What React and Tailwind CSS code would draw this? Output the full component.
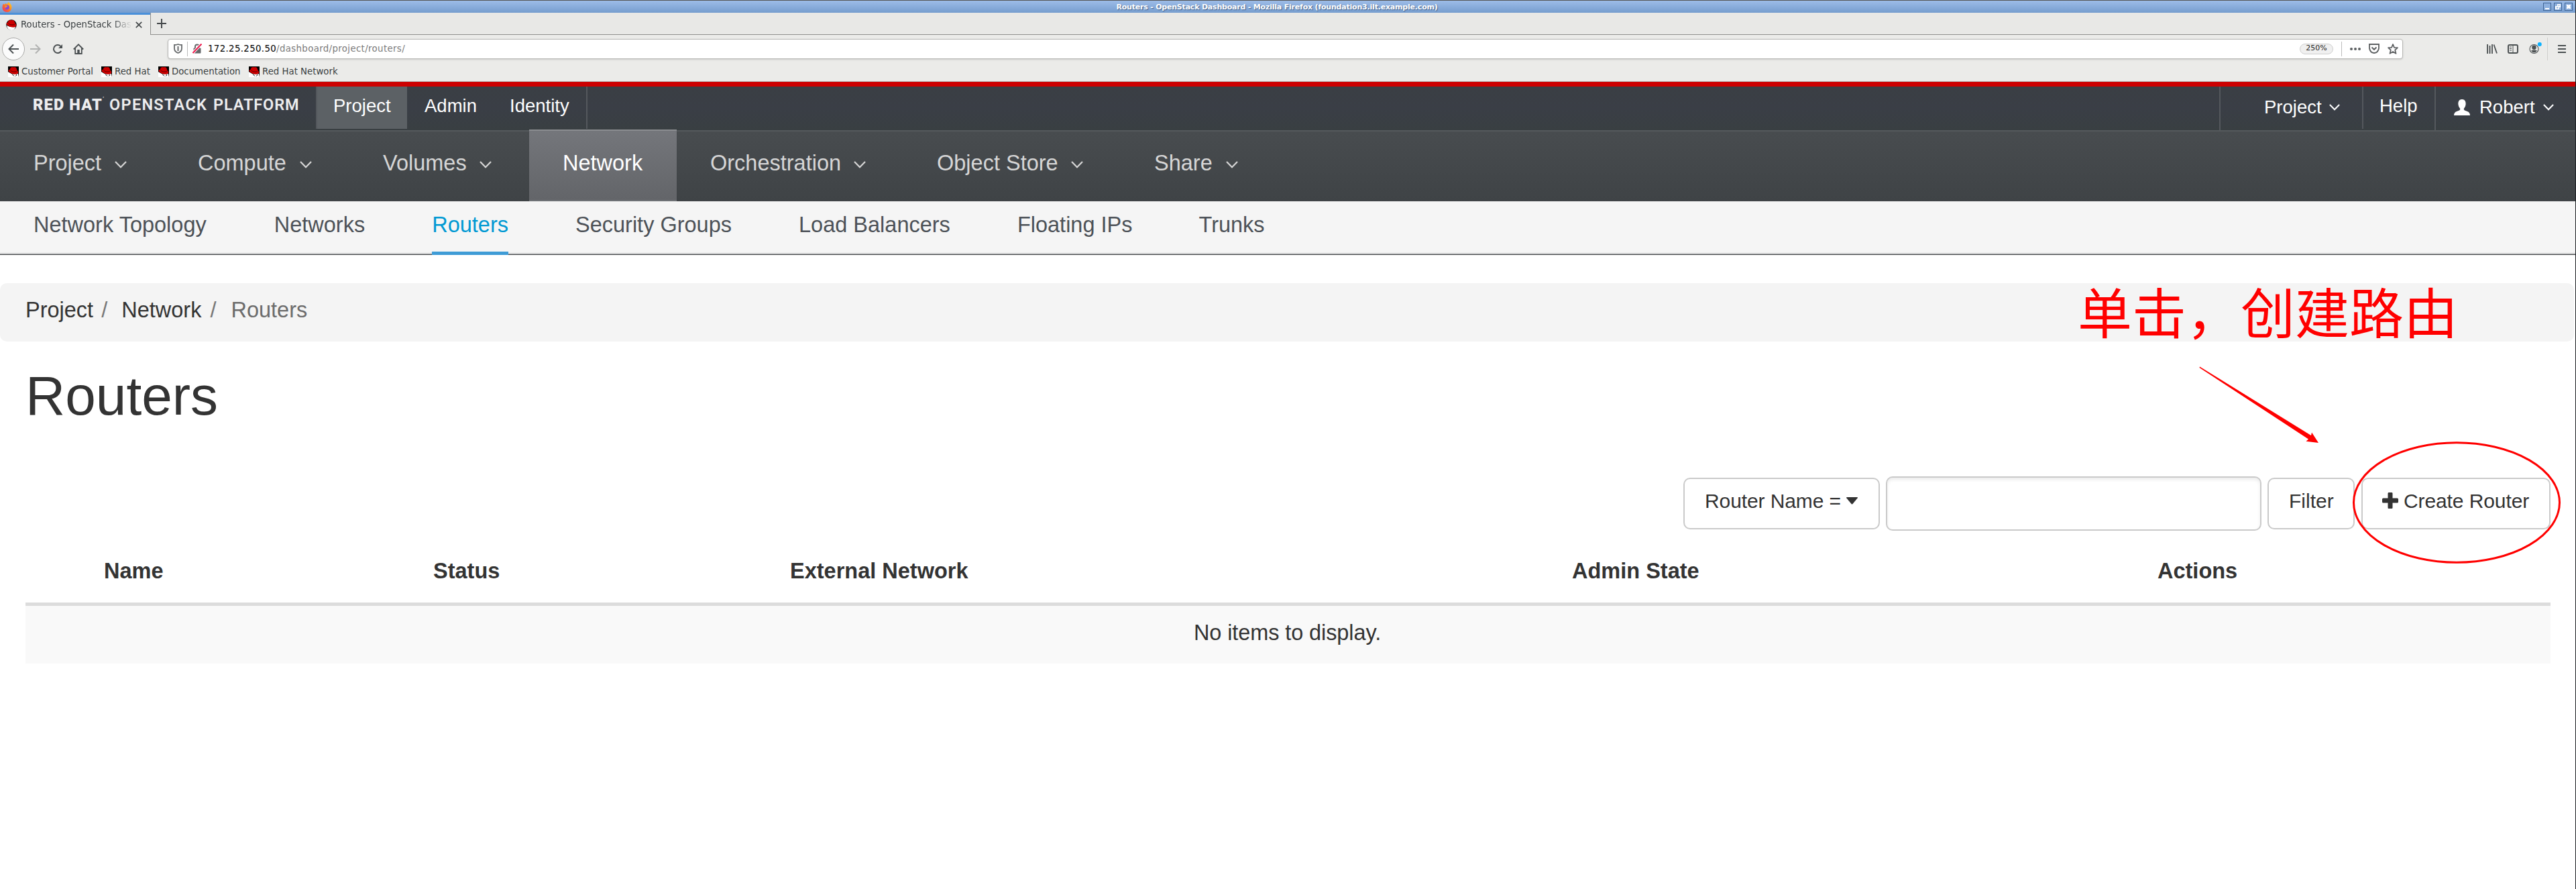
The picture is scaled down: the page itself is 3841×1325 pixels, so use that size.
import React from "react";

const sans = "font-['Liberation_Sans',sans-serif]";

function HatIcon({ round }) {
  return (
    <svg viewBox="0 0 16 16" className="h-4 w-4 shrink-0">
      {round ? <circle cx="8" cy="8" r="7.8" fill="#111" /> : <rect width="16" height="16" fill="#000" />}
      <path d={round ? "M1 9 L6 11 L14 11 Q13 16 8 16 Q2 16 1 9Z" : "M0 8 L6 11.500 L15 11 L16 16 H0Z"} fill="#fff" />
      <path d="M3.500 2 Q6 .3 8 1.3 Q12 .3 12.8 3.500 L13.500 6 Q16 8 14.800 10.200 Q12 13 6.500 11 Q.5 8.500 .6 6 Q1.200 4.300 3 4.500Z" fill="#cc0000" />
      <path d="M3.500 6 Q7 9 12.800 7.500" stroke="#5a0000" strokeWidth=".9" fill="none" />
      {!round && <path d="M6.500 12 L9 14.500 M13 12 L11.500 14.500" stroke="#000" strokeWidth="1" />}
    </svg>
  );
}

function Chevron({ className }) {
  return (
    <svg viewBox="0 0 18 11" className={className} fill="none" stroke="currentColor" strokeWidth="2.3">
      <path d="M1 1 L9 9.200 L17 1" />
    </svg>
  );
}

function TitleBar() {
  return (
    <div className="relative flex h-[19px] items-center justify-center border-t border-[#555] bg-gradient-to-b from-[#9dbce8] to-[#769dce]">
      <svg viewBox="0 0 16 16" className="absolute left-[3px] top-[2px] h-[15px] w-[15px]">
        <defs>
          <linearGradient id="fx" x1="1" y1="0" x2="0" y2="1">
            <stop offset="0" stopColor="#ffe226" />
            <stop offset=".5" stopColor="#ff7a1f" />
            <stop offset="1" stopColor="#f0246b" />
          </linearGradient>
        </defs>
        <path d="M2 3 L4 4 L6 2 L8 3.500 L10 0 Q16 4 15.500 9 Q14.500 16 8 16 Q1 15.500 .5 9 Q.5 5 2 3Z" fill="url(#fx)" />
        <circle cx="8" cy="8.500" r="3.600" fill="#8a45d6" />
        <path d="M4.500 6 Q7 5 9 7 Q6 8 5 10Z" fill="#ff9a1f" />
      </svg>
      <span className="mr-[32px] whitespace-nowrap font-['DejaVu_Sans',sans-serif] text-[11px] font-bold leading-[17px] tracking-[-0.2px] text-white [text-shadow:1px_1px_1px_#3f5f8a]">
        Routers - OpenStack Dashboard - Mozilla Firefox (foundation3.ilt.example.com)
      </span>
      <div className="absolute right-[4px] top-[3px] flex gap-1">
        {["M3 8 H9 V10 H3Z", "M5 2 H10 V7 H8 V10 H2 V5 H5Z M4 6.500 V8.500 H6.500 V6.500Z M6.500 3.500 V5 H8.500 V3.500Z", "M3 3 H5 L6 4 L7 3 H9 V5 L8 6 L9 7 V9 H7 L6 8 L5 9 H3 V7 L4 6 L3 5Z"].map((d) => (
          <svg key={d} viewBox="0 0 12 12" className="h-3 w-3">
            <rect x=".5" y=".5" width="11" height="11" fill="#8db0de" stroke="#3f6596" />
            <path d={d} fill="#fff" fillRule="evenodd" />
          </svg>
        ))}
      </div>
    </div>
  );
}

function TabStrip() {
  return (
    <div className="flex h-[33px]">
      <div className="flex w-[224px] items-center border-t-[3px] border-[#4a90d9] bg-[#ebebe9] pl-[9px]">
        <HatIcon round />
        <div className="ml-[6px] w-[166px] whitespace-nowrap text-[13.2px] text-[#3a3f41] [mask-image:linear-gradient(to_right,black_82%,transparent_100%)]">
          Routers - OpenStack Das
        </div>
        <svg viewBox="0 0 10 10" className="ml-[5px] h-[10px] w-[10px]" stroke="#45494b" strokeWidth="1.700">
          <path d="M.8 .8 L9.200 9.200 M9.200 .8 L.8 9.200" />
        </svg>
      </div>
      <div className="flex flex-1 items-center border-b border-l border-[#8f8f8d] bg-[#e8e8e6] pl-[9px]">
        <svg viewBox="0 0 14 14" className="h-[14px] w-[14px]" stroke="#45494b" strokeWidth="2">
          <path d="M7 0 V14 M0 7 H14" />
        </svg>
      </div>
    </div>
  );
}

function AddressBar() {
  return (
    <div className="flex h-[41px] items-center text-[#4b5052]">
      <div className="ml-[3px] flex h-[34px] w-[34px] items-center justify-center rounded-full border border-[#a9a9a7] bg-[#fbfbfb]">
        <svg viewBox="0 0 16 16" className="h-4 w-4" fill="none" stroke="currentColor" strokeWidth="2">
          <path d="M16 8 H1.500 M8 1.500 L1.500 8 L8 14.500" />
        </svg>
      </div>
      <svg viewBox="0 0 16 16" className="ml-2 h-4 w-4" fill="none" stroke="#b1b2b1" strokeWidth="2">
        <path d="M0 8 H14.500 M8 1.500 L14.500 8 L8 14.500" />
      </svg>
      <svg viewBox="0 0 16 16" className="ml-[17px] h-4 w-4" fill="none" stroke="currentColor" strokeWidth="2">
        <path d="M12.800 4.500 A6 6 0 1 0 13.200 11" />
        <path d="M15 1 V7 H9Z" fill="currentColor" stroke="none" />
      </svg>
      <svg viewBox="0 0 16 16" className="ml-[15px] h-4 w-4" fill="none" stroke="currentColor" strokeWidth="1.800">
        <path d="M.8 8.500 L8 1.300 L15.200 8.500 M3.200 7 V15 H12.800 V7" />
        <path d="M6.300 9 H9.700 V15 H6.300Z" fill="currentColor" stroke="none" />
      </svg>
      <div className="ml-[125px] flex h-[30px] w-[3333px] items-center rounded-[4px] border border-[#b6b6b4] bg-white shadow-sm">
        <svg viewBox="0 0 13 15" className="ml-[8px] h-[15px] w-[13px]" fill="none" stroke="#65686a" strokeWidth="1.800">
          <path d="M6.500 1 Q9 2 12 2 V7 Q12 12 6.500 14 Q1 12 1 7 V2 Q4 2 6.500 1Z" />
          <path d="M6.500 4 V11" strokeWidth="2" />
        </svg>
        <div className="ml-[7px] h-[22px] w-px bg-[#bbb]" />
        <svg viewBox="0 0 14 15" className="ml-[7px] h-[15px] w-[14px]">
          <rect x="1.500" y="6.500" width="11" height="8" rx="1" fill="#65686a" />
          <path d="M4 7 V4.500 Q4 1.500 7 1.500 Q10 1.500 10 4.500 V7" fill="none" stroke="#65686a" strokeWidth="2" />
          <path d="M0 14.500 L13.500 .5" stroke="#fff" strokeWidth="4" />
          <path d="M.5 14 L13.500 .5" stroke="#ed1c4e" strokeWidth="2" />
        </svg>
        <div className="ml-[9px] flex-1 whitespace-nowrap text-[13.3px] tracking-[0.37px] text-[#7a7a7a]">
          <span className="text-black">172.25.250.50</span>/dashboard/project/routers/
        </div>
        <div className="flex h-4 w-[50px] items-center justify-center rounded-full border border-[#cfcfcf] bg-[#f0f0f0] text-[11px] text-[#222]">250%</div>
        <div className="ml-[12px] h-[22px] w-px bg-[#bbb]" />
        <svg viewBox="0 0 16 4" className="ml-[12px] h-1 w-4" fill="#5c5f61">
          <circle cx="2" cy="2" r="2" />
          <circle cx="8" cy="2" r="2" />
          <circle cx="14" cy="2" r="2" />
        </svg>
        <svg viewBox="0 0 16 15" className="ml-[12px] h-[15px] w-4" fill="none" stroke="#5c5f61" strokeWidth="1.800">
          <path d="M1 1 H15 V7 Q14 13.500 8 14 Q2 13.500 1 7Z" />
          <path d="M4.500 5.500 L8 8.800 L11.500 5.500" strokeWidth="2" />
        </svg>
        <svg viewBox="0 0 16 16" className="ml-[12px] mr-[6px] h-4 w-4" fill="none" stroke="#5c5f61" strokeWidth="1.700" strokeLinejoin="round">
          <path d="M8 1 L10 5.800 L15 6.200 L11.200 9.500 L12.500 14.800 L8 12 L3.500 14.800 L4.800 9.500 L1 6.200 L6 5.800Z" />
        </svg>
      </div>
      <svg viewBox="0 0 16 14" className="ml-[125px] h-[14px] w-4" stroke="currentColor" strokeWidth="1.800">
        <path d="M1 0 V14 M4.500 2 V14 M8 0 V14 M10.500 .5 L15 13.500" />
      </svg>
      <svg viewBox="0 0 16 14" className="ml-[15px] h-[14px] w-4" fill="none" stroke="currentColor" strokeWidth="2">
        <rect x="1" y="1" width="14" height="12" rx="2" />
        <path d="M8 1 V13" strokeWidth="1" />
        <path d="M3 4 H6 M3 6.500 H6 M3 9 H6" strokeWidth="1" />
      </svg>
      <svg viewBox="0 0 20 20" className="-mt-[4px] ml-[16px] h-5 w-5">
        <circle cx="7.500" cy="12" r="6.500" fill="none" stroke="#4b5052" strokeWidth="1.100" />
        <circle cx="7.500" cy="9.800" r="3.200" fill="#4b5052" />
        <path d="M3 14.500 Q7.500 12.500 12 14.500 Q10 17.300 7.500 17.300 Q5 17.300 3 14.500Z" fill="#4b5052" />
        <circle cx="15.800" cy="5" r="3" fill="#0ab1ff" />
      </svg>
      <div className="ml-[7px] h-[34px] w-px bg-[#cfcfcd]" />
      <svg viewBox="0 0 12 12" className="ml-[15px] h-3 w-3" stroke="currentColor" strokeWidth="2">
        <path d="M0 1 H12 M0 6 H12 M0 11 H12" />
      </svg>
    </div>
  );
}

function Bookmarks() {
  const items = [
    ["Customer Portal", "w-[139px]"],
    ["Red Hat", "w-[85px]"],
    ["Documentation", "w-[135px]"],
    ["Red Hat Network", "w-[160px]"],
  ];
  return (
    <div className="flex h-[29px] border-b border-[#b5b5b3] pl-[12px] pt-[6px]">
      {items.map(([t, w]) => (
        <div key={t} className={"flex h-4 shrink-0 items-center gap-1 whitespace-nowrap text-[13.3px] text-[#3a3f41] " + w}>
          <HatIcon />
          {t}
        </div>
      ))}
    </div>
  );
}

function MastHead() {
  return (
    <div className="flex h-[72px] justify-between border-t-[7px] border-[#cc0000] bg-gradient-to-b from-[#3a3f44] via-[#3a3e46] to-[#393f42] text-[27.5px] leading-[57px] text-white">
      <div className="flex">
        <div className="flex w-[471px] whitespace-nowrap pl-[49px] font-['Roboto',sans-serif] text-[23.5px] leading-[54px] text-[#ededee]">
          <span className="w-[114px] font-black tracking-[1.2px]">RED HAT<span className="align-top text-[7px] leading-[38px]">’</span></span>
          <span className="w-[155px] font-semibold tracking-[1.3px]">OPENSTACK</span>
          <span className="font-semibold tracking-[0.9px]">PLATFORM</span>
        </div>
        <div className="h-[63px] w-[136px] border-l-2 border-[#54585d] bg-[#5c6165] pl-[24px]">Project</div>
        <div className="w-[128px] pl-[26px]">Admin</div>
        <div className="h-[63px] w-[141px] border-r-2 border-[#54585d] pl-[25px]">Identity</div>
      </div>
      <div className="flex">
        <div className="flex w-[213px] border-l-2 border-[#54585d] pl-[65px] leading-[61px]">
          Project
          <Chevron className="ml-[11px] mt-[26px] h-[10px] w-4" />
        </div>
        <div className="h-[63px] w-[108px] border-l-2 border-[#54585d] pl-[24px]">Help</div>
        <div className="flex w-[210px] border-l-2 border-[#54585d] pl-[27px] leading-[61px]">
          <svg viewBox="0 0 24 24" className="mt-[19px] h-6 w-6" fill="currentColor">
            <path d="M12 0 C16 0 18 3 17.600 7.500 C17.300 10.500 16 12.500 15 13.500 C14.500 15 15 16 16 16.500 L21 18.500 Q24 20 24 24 H0 Q0 20 3 18.500 L8 16.500 C9 16 9.500 15 9 13.500 C8 12.500 6.700 10.500 6.400 7.500 C6 3 8 0 12 0Z" />
          </svg>
          <span className="ml-[14px]">Robert</span>
          <Chevron className="ml-[12px] mt-[26px] h-[10px] w-4" />
        </div>
      </div>
    </div>
  );
}

function PrimaryNav() {
  const items = [
    ["Project", "w-[245px]"],
    ["Compute", "w-[276px]"],
    ["Volumes", "w-[268px]"],
    ["Network", "w-[220px]"],
    ["Orchestration", "w-[338px]"],
    ["Object Store", "w-[324px]"],
    ["Share", "w-[231px]"],
  ];
  return (
    <div className="flex h-[106px] border-t-2 border-[#55595c] bg-gradient-to-b from-[#484c4f] to-[#3f4346] text-[32.5px] leading-[94px] text-[#d6d6d6]">
      {items.map(([t, w]) =>
        t === "Network" ? (
          <div key={t} className={"relative z-10 -mt-[3px] h-[107px] border-b-2 border-t-2 border-b-[#6f7276] border-t-[#8b8d90] bg-gradient-to-b from-[#74767b] to-[#636569] pl-[50px] leading-[96px] text-white " + w}>
            {t}
          </div>
        ) : (
          <div key={t} className={"flex justify-between whitespace-nowrap pl-[50px] pr-[56px] " + w}>
            {t}
            <Chevron className="mt-[44px] h-[11px] w-[18px]" />
          </div>
        )
      )}
    </div>
  );
}

function SecondaryNav() {
  const items = [
    ["Network Topology", "mr-px"],
    ["Networks", ""],
    ["Routers", "h-[80px] border-b-[5px] border-[#3f9cd6] text-[#0099d3]"],
    ["Security Groups", ""],
    ["Load Balancers", ""],
    ["Floating IPs", "-mr-px"],
    ["Trunks", ""],
  ];
  return (
    <div className="flex h-[80px] gap-[100px] border-b border-[#33373a] bg-[#f5f5f5] pl-[50px] text-[32.5px] leading-[71px] text-[#4d5258] shadow-[inset_0_-2px_0_#c9cacb]">
      {items.map(([t, extra]) => (
        <div key={t} className={"whitespace-nowrap " + extra}>
          {t}
        </div>
      ))}
    </div>
  );
}

function Toolbar() {
  const btn = "flex h-[77px] shrink-0 items-start rounded-[10px] border-2 border-[#cacaca] bg-white text-[30px] leading-[66px] whitespace-nowrap";
  return (
    <div className="flex items-center justify-end pr-[37px] text-[#333]">
      <div className={btn + " w-[293px] pl-[30px] tracking-[-0.1px]"}>
        Router Name =
        <svg viewBox="0 0 17 11" className="ml-[8px] mt-[27px] h-[11px] w-[17px]" fill="#333">
          <path d="M0 1 Q0 0 1 0 H16 Q17 0 17 1 L9.500 10 Q8.500 11 7.500 10Z" />
        </svg>
      </div>
      <div className="ml-[9px] h-[81px] w-[560px] rounded-[10px] border-2 border-[#cacaca] bg-white shadow-[inset_0_3px_5px_rgba(0,0,0,0.08)]" />
      <div className={btn + " ml-[9px] w-[130px] pl-[30px]"}>Filter</div>
      <div className={btn + " ml-[10px] w-[282px] pl-[29px] tracking-[-0.1px]"}>
        <svg viewBox="0 0 24 24" className="mr-[8px] mt-[20px] h-6 w-6" fill="#333">
          <path d="M9.500 0 H14.500 Q15.500 0 15.500 1.500 V8.500 H22.500 Q24 8.500 24 10 V14 Q24 15.500 22.500 15.500 H15.500 V22.500 Q15.500 24 14.500 24 H9.500 Q8.500 24 8.500 22.500 V15.500 H1.500 Q0 15.500 0 14 V10 Q0 8.500 1.500 8.500 H8.500 V1.500 Q8.500 0 9.500 0Z" />
        </svg>
        Create Router
      </div>
    </div>
  );
}

function RoutersTable() {
  return (
    <div className="ml-[38px] w-[3765px] text-[32.5px] text-[#333]">
      <div className="grid h-[107px] grid-cols-[491px_532px_1166px_873px_585px] border-b-[5px] border-[#dcdcdc] pl-[117px] font-bold leading-[110px]">
        {["Name", "Status", "External Network", "Admin State", "Actions"].map((t) => (
          <div key={t} className="whitespace-nowrap">{t}</div>
        ))}
      </div>
      <div className="h-[86px] bg-[#f9f9f9] pr-[2px] text-center leading-[80px] tracking-[-0.1px]">No items to display.</div>
    </div>
  );
}

function Annotation() {
  return (
    <>
      <div className="absolute left-[3098px] top-[416px] whitespace-nowrap font-['Noto_Sans_CJK_SC',sans-serif] text-[81px] leading-[92px] text-[#ff0000]">
        单击，创建路由
      </div>
      <svg viewBox="0 0 580 310" className="absolute left-[3260px] top-[540px] h-[310px] w-[580px]">
        <path d="M20 6.500 L19.500 8 L182 114.500 L178.500 117.700 L197 120 L187 104.500 L186 109Z" fill="#f00" />
        <ellipse cx="403" cy="209" rx="153.500" ry="89.300" fill="none" stroke="#f00" strokeWidth="3" />
      </svg>
    </>
  );
}

export default function App() {
  return (
    <div className={"relative h-[1325px] w-[3841px] overflow-hidden border-r border-[#1b1e22] bg-white " + sans}>
      <div className="bg-[#ebebe9] font-['DejaVu_Sans',sans-serif]">
        <TitleBar />
        <TabStrip />
        <AddressBar />
        <Bookmarks />
      </div>
      <MastHead />
      <PrimaryNav />
      <SecondaryNav />
      <div className="mt-[42px] flex h-[87px] w-[3838px] gap-[12px] rounded-[10px] bg-[#f4f4f4] pl-[38px] text-[32.5px] leading-[80px] text-[#333]">
        <span>Project</span>
        <span className="mr-[9px] text-[#777]">/</span>
        <span>Network</span>
        <span className="ml-px mr-[10px] text-[#777]">/</span>
        <span className="text-[#6c6c6c]">Routers</span>
      </div>
      <h1 className="mt-[31px] h-[170px] pl-[38px] text-[82px] leading-[100px] text-[#333]">Routers</h1>
      <Toolbar />
      <div className="h-[5px]" />
      <RoutersTable />
      <Annotation />
    </div>
  );
}
